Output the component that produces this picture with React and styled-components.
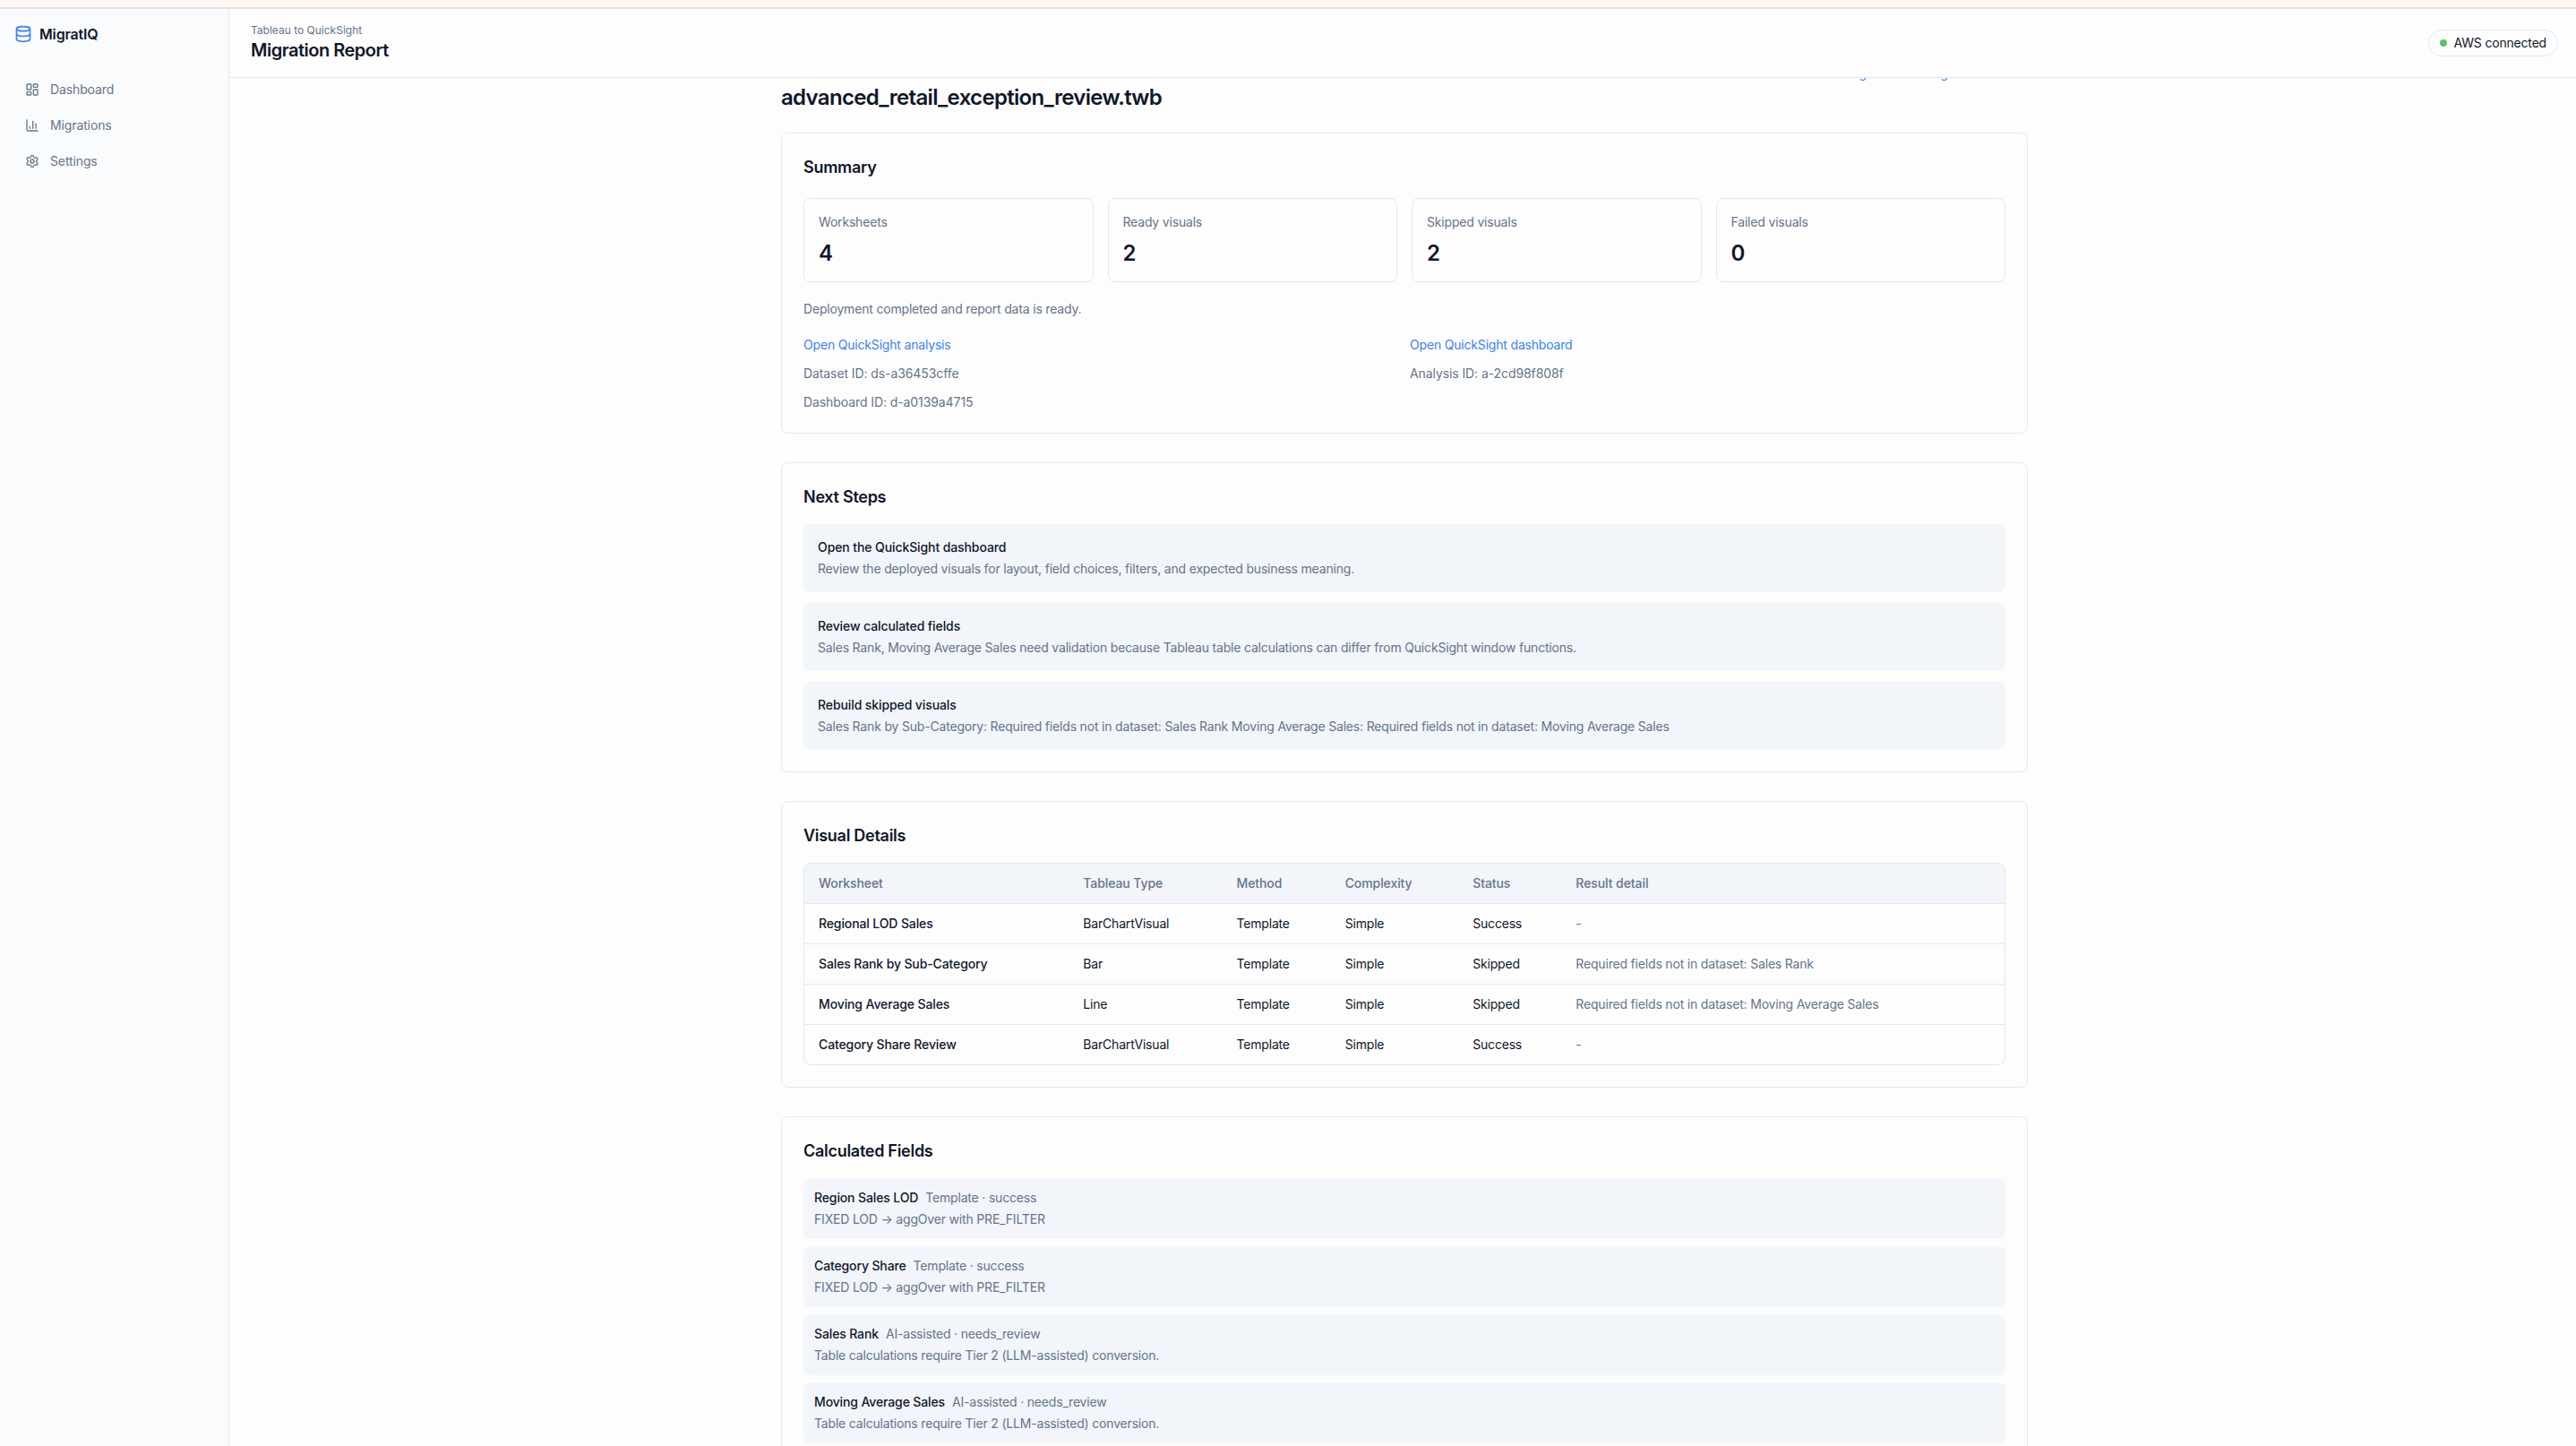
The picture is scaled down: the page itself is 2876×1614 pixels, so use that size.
import React from "react";
import styled, { createGlobalStyle, css } from "styled-components";
import { Database, LayoutDashboard, ChartColumn, Settings } from "lucide-react";

const ink = "#0f172a";
const muted = "#64748b";
const line = "#e2e8f0";
const blue = "#3b82f6";
const paper = "#fdfdfd";
const soft = "#f2f5fa";

const GlobalStyle = createGlobalStyle`
  * { box-sizing: border-box; }
  html, body { margin: 0; height: 100%; overflow: hidden; }
  body {
    background: ${paper};
    color: ${ink};
    font: 400 14px/20px Inter, "Liberation Sans", sans-serif;
    letter-spacing: -0.185px;
  }
  h1, h2, p { margin: 0; }
  a { color: inherit; text-decoration: none; }
`;

const Screen = styled.div`
  width: 2880px;
  height: 1614px;
  display: flex;
  flex-direction: column;
  overflow: hidden;
`;
const Banner = styled.div`
  flex: none;
  height: 10px;
  background: #fff9f6;
  border-bottom: 2px solid #e9e1e0;
`;
const Shell = styled.div`
  flex: 1;
  min-height: 0;
  display: flex;
`;
const Sidebar = styled.aside`
  width: 256px;
  flex: none;
  background: #fafbfd;
  border-right: 1px solid ${line};
`;
const Brand = styled.div`
  height: 56px;
  padding: 0 16px;
  display: flex;
  align-items: center;
  gap: 8px;
  font-size: 16px;
  line-height: 24px;
  font-weight: 600;
  letter-spacing: -0.16px;
  svg { color: ${blue}; }
`;
const Nav = styled.nav`
  padding: 16px;
  display: flex;
  flex-direction: column;
  gap: 4px;
`;
const NavItem = styled.a`
  height: 36px;
  padding: 0 12px;
  display: flex;
  align-items: center;
  gap: 12px;
  color: ${muted};
  letter-spacing: -0.12px;
`;
const Main = styled.div`
  flex: 1;
  min-width: 0;
  display: flex;
  flex-direction: column;
`;
const Header = styled.header`
  flex: none;
  height: 77px;
  padding: 0 24px;
  display: flex;
  align-items: center;
  justify-content: space-between;
  border-bottom: 1px solid ${line};
`;
const Eyebrow = styled.p`
  font-size: 12px;
  line-height: 16px;
  letter-spacing: 0;
  color: ${muted};
`;
const PageTitle = styled.h1`
  font-size: 20px;
  line-height: 28px;
  font-weight: 600;
  letter-spacing: -0.5px;
`;
const Badge = styled.div`
  height: 30px;
  padding: 0 12px;
  display: flex;
  align-items: center;
  gap: 8px;
  border: 1px solid ${line};
  border-radius: 15px;
`;
const Dot = styled.span`
  width: 8px;
  height: 8px;
  border-radius: 50%;
  background: #5cc36b;
`;
const Scroller = styled.main`
  flex: 1;
  min-height: 0;
  overflow: hidden;
  display: flex;
  flex-direction: column;
  align-items: center;
`;
const Content = styled.div`
  width: 1392px;
  flex: none;
  margin-top: -15px;
`;
const TopLinks = styled.div`
  height: 20px;
  padding-right: 4px;
  display: flex;
  justify-content: flex-end;
  gap: 48px;
  color: ${blue};
`;
const FileName = styled.h1`
  font-size: 24px;
  line-height: 32px;
  font-weight: 600;
  letter-spacing: -0.68px;
  padding-top: 1px;
  margin-bottom: 23px;
`;
const Stack = styled.div`
  display: flex;
  flex-direction: column;
  gap: ${(p) => p.$gap}px;
`;
const Card = styled.section`
  border: 1px solid ${line};
  border-radius: 8px;
  padding: 24px;
`;
const CardTitle = styled.h2`
  font-size: 18px;
  line-height: 28px;
  font-weight: 600;
  letter-spacing: -0.28px;
  margin-bottom: ${(p) => p.$space || 16}px;
`;
const Stats = styled.div`
  display: grid;
  grid-template-columns: repeat(4, 1fr);
  gap: 16px;
`;
const Stat = styled.div`
  border: 1px solid ${line};
  border-radius: 8px;
  padding: 16px;
`;
const Muted = styled.p`
  color: ${muted};
`;
const StatValue = styled.p`
  margin: 9px 0 -1px;
  font-size: 24px;
  line-height: 32px;
  font-weight: 600;
`;
const Note = styled(Muted)`
  margin: 20px 0;
`;
const Links = styled.div`
  display: grid;
  grid-template-columns: 1fr 1fr;
  gap: 12px;
  color: ${muted};
`;
const BlueLink = styled.a`
  && { color: ${blue}; }
`;
const Identifier = styled.span`
  letter-spacing: -0.09px;
`;
const Box = styled.div`
  background: ${soft};
  border-radius: 8px;
  padding: ${(p) => (p.$tight ? "12px" : "16px")};
`;
const Strong = styled.p`
  font-weight: 500;
  letter-spacing: -0.1px;
  margin-bottom: 4px;
`;
const FieldHead = styled.div`
  display: flex;
  gap: 8px;
  margin-bottom: 4px;
  color: ${muted};
  strong { font-weight: 500; letter-spacing: -0.13px; color: ${ink}; }
`;
const Table = styled.div`
  border: 1px solid ${line};
  border-radius: 8px;
  overflow: hidden;
`;
const Row = styled.div`
  display: grid;
  grid-template-columns: 295.3px 171.2px 121.2px 142.5px 115.2px 1fr;
  border-bottom: 1px solid ${line};
  &:last-child { border-bottom: 0; }
  ${(p) => p.$head && css`background: ${soft}; color: ${muted}; font-weight: 500; letter-spacing: -0.08px;`}
`;
const Cell = styled.div`
  padding: 12px 16px;
  ${(p) => p.$strong && css`font-weight: 500; letter-spacing: -0.12px;`}
  ${(p) => p.$dim && css`color: ${muted};`}
`;

const stats = [["Worksheets", 4], ["Ready visuals", 2], ["Skipped visuals", 2], ["Failed visuals", 0]];
const steps = [
  ["Open the QuickSight dashboard", "Review the deployed visuals for layout, field choices, filters, and expected business meaning."],
  ["Review calculated fields", "Sales Rank, Moving Average Sales need validation because Tableau table calculations can differ from QuickSight window functions."],
  ["Rebuild skipped visuals", "Sales Rank by Sub-Category: Required fields not in dataset: Sales Rank Moving Average Sales: Required fields not in dataset: Moving Average Sales"],
];
const columns = ["Worksheet", "Tableau Type", "Method", "Complexity", "Status", "Result detail"];
const visuals = [
  ["Regional LOD Sales", "BarChartVisual", "Template", "Simple", "Success", "-"],
  ["Sales Rank by Sub-Category", "Bar", "Template", "Simple", "Skipped", "Required fields not in dataset: Sales Rank"],
  ["Moving Average Sales", "Line", "Template", "Simple", "Skipped", "Required fields not in dataset: Moving Average Sales"],
  ["Category Share Review", "BarChartVisual", "Template", "Simple", "Success", "-"],
];
const lod = "FIXED LOD → aggOver with PRE_FILTER";
const tier = "Table calculations require Tier 2 (LLM-assisted) conversion.";
const fields = [
  ["Region Sales LOD", "Template · success", lod],
  ["Category Share", "Template · success", lod],
  ["Sales Rank", "AI-assisted · needs_review", tier],
  ["Moving Average Sales", "AI-assisted · needs_review", tier],
];

export default function App() {
  return (
    <Screen>
      <GlobalStyle />
      <Banner />
      <Shell>
        <Sidebar>
          <Brand><Database size={20} />MigratIQ</Brand>
          <Nav>
            <NavItem><LayoutDashboard size={16} />Dashboard</NavItem>
            <NavItem><ChartColumn size={16} />Migrations</NavItem>
            <NavItem><Settings size={16} />Settings</NavItem>
          </Nav>
        </Sidebar>
        <Main>
          <Header>
            <div>
              <Eyebrow>Tableau to QuickSight</Eyebrow>
              <PageTitle>Migration Report</PageTitle>
            </div>
            <Badge><Dot />AWS connected</Badge>
          </Header>
          <Scroller>
            <Content>
              <TopLinks>
                <a>Review insight</a>
                <a>Insight dashboard</a>
              </TopLinks>
              <FileName>advanced_retail_exception_review.twb</FileName>
              <Stack $gap={32}>
                <Card>
                  <CardTitle $space={20}>Summary</CardTitle>
                  <Stats>
                    {stats.map(([label, value]) => (
                      <Stat key={label}><Muted>{label}</Muted><StatValue>{value}</StatValue></Stat>
                    ))}
                  </Stats>
                  <Note>Deployment completed and report data is ready.</Note>
                  <Links>
                    <BlueLink>Open QuickSight analysis</BlueLink>
                    <BlueLink>Open QuickSight dashboard</BlueLink>
                    <Identifier>Dataset ID: ds-a36453cffe</Identifier>
                    <Identifier>Analysis ID: a-2cd98f808f</Identifier>
                    <Identifier>Dashboard ID: d-a0139a4715</Identifier>
                  </Links>
                </Card>
                <Card>
                  <CardTitle>Next Steps</CardTitle>
                  <Stack $gap={12}>
                    {steps.map(([title, text]) => (
                      <Box key={title}><Strong>{title}</Strong><Muted>{text}</Muted></Box>
                    ))}
                  </Stack>
                </Card>
                <Card>
                  <CardTitle>Visual Details</CardTitle>
                  <Table>
                    <Row $head>{columns.map((c) => <Cell key={c}>{c}</Cell>)}</Row>
                    {visuals.map((row) => (
                      <Row key={row[0]}>
                        {row.map((value, i) => (
                          <Cell key={columns[i]} $strong={i === 0} $dim={i === 5}>{value}</Cell>
                        ))}
                      </Row>
                    ))}
                  </Table>
                </Card>
                <Card>
                  <CardTitle>Calculated Fields</CardTitle>
                  <Stack $gap={8}>
                    {fields.map(([name, state, text]) => (
                      <Box key={name} $tight>
                        <FieldHead><strong>{name}</strong><span>{state}</span></FieldHead>
                        <Muted>{text}</Muted>
                      </Box>
                    ))}
                  </Stack>
                </Card>
              </Stack>
            </Content>
          </Scroller>
        </Main>
      </Shell>
    </Screen>
  );
}
